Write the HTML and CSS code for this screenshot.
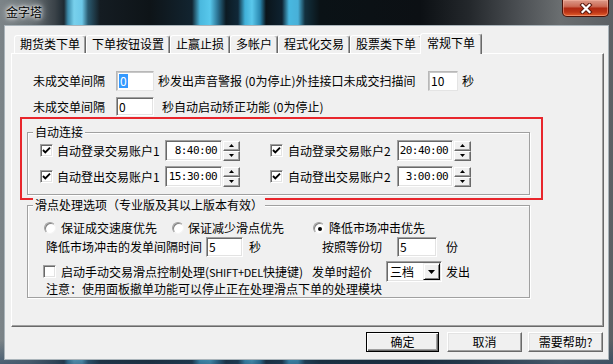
FILE: index.html
```html
<!DOCTYPE html>
<html lang="zh-CN">
<head>
<meta charset="utf-8">
<title>金字塔</title>
<link rel="stylesheet" href="styles.css">
</head>
<body>
<div class="window">
  <div class="titlebar">
    <span class="title">金字塔</span>
    <div class="close">
      <svg width="14" height="11" viewBox="0 0 14 11"><path d="M3.5 2 L10.5 9 M10.5 2 L3.5 9" stroke="#5a1a10" stroke-width="4.2" stroke-linecap="square"/><path d="M3.5 2 L10.5 9 M10.5 2 L3.5 9" stroke="#fff" stroke-width="2.2" stroke-linecap="square"/></svg>
    </div>
  </div>
  <div class="client">
    <div class="tabstrip">
      <div class="tab">期货类下单</div>
      <div class="tab">下单按钮设置</div>
      <div class="tab">止赢止损</div>
      <div class="tab">多帐户</div>
      <div class="tab">程式化交易</div>
      <div class="tab">股票类下单</div>
      <div class="tab active">常规下单</div>
    </div>
    <div class="panel">
      <div class="row r1">
        <span class="lbl w83">未成交单间隔</span>
        <span class="edit light e38"><span class="sel">0</span></span>
        <span class="t1">秒发出声音警报 (0为停止)外挂接口未成交扫描间</span>
        <span class="edit light e30">10</span>
        <span class="ml4">秒</span>
      </div>
      <div class="row r2">
        <span class="lbl w83">未成交单间隔</span>
        <span class="edit e38">0</span>
        <span class="ml8">秒自动启动矫正功能 (0为停止)</span>
      </div>

      <div class="redbox">
        <div class="group g1">
          <span class="legend">自动连接</span>
          <div class="grow">
            <div class="cell1">
              <span class="chk"><svg width="11" height="11" viewBox="0 0 11 11"><path d="M2 5 L4.3 7.4 L9 2.6" fill="none" stroke="#000" stroke-width="1.9"/></svg></span>
              <span class="clabel w108">自动登录交易账户1</span>
              <span class="edit time">8:40:00</span>
              <span class="spin"><span class="sb"><svg width="5" height="3" viewBox="0 0 5 3"><path d="M2.5 0 L5 3 L0 3Z" fill="#000"/></svg></span><span class="sb"><svg width="5" height="3" viewBox="0 0 5 3"><path d="M0 0 L5 0 L2.5 3Z" fill="#000"/></svg></span></span>
            </div>
            <div class="cell2">
              <span class="chk"><svg width="11" height="11" viewBox="0 0 11 11"><path d="M2 5 L4.3 7.4 L9 2.6" fill="none" stroke="#000" stroke-width="1.9"/></svg></span>
              <span class="clabel w109">自动登录交易账户2</span>
              <span class="edit time t56">20:40:00</span>
              <span class="spin"><span class="sb"><svg width="5" height="3" viewBox="0 0 5 3"><path d="M2.5 0 L5 3 L0 3Z" fill="#000"/></svg></span><span class="sb"><svg width="5" height="3" viewBox="0 0 5 3"><path d="M0 0 L5 0 L2.5 3Z" fill="#000"/></svg></span></span>
            </div>
          </div>
          <div class="grow">
            <div class="cell1">
              <span class="chk"><svg width="11" height="11" viewBox="0 0 11 11"><path d="M2 5 L4.3 7.4 L9 2.6" fill="none" stroke="#000" stroke-width="1.9"/></svg></span>
              <span class="clabel w108">自动登出交易账户1</span>
              <span class="edit time">15:30:00</span>
              <span class="spin"><span class="sb"><svg width="5" height="3" viewBox="0 0 5 3"><path d="M2.5 0 L5 3 L0 3Z" fill="#000"/></svg></span><span class="sb"><svg width="5" height="3" viewBox="0 0 5 3"><path d="M0 0 L5 0 L2.5 3Z" fill="#000"/></svg></span></span>
            </div>
            <div class="cell2">
              <span class="chk"><svg width="11" height="11" viewBox="0 0 11 11"><path d="M2 5 L4.3 7.4 L9 2.6" fill="none" stroke="#000" stroke-width="1.9"/></svg></span>
              <span class="clabel w109">自动登出交易账户2</span>
              <span class="edit time t56">3:00:00</span>
              <span class="spin"><span class="sb"><svg width="5" height="3" viewBox="0 0 5 3"><path d="M2.5 0 L5 3 L0 3Z" fill="#000"/></svg></span><span class="sb"><svg width="5" height="3" viewBox="0 0 5 3"><path d="M0 0 L5 0 L2.5 3Z" fill="#000"/></svg></span></span>
            </div>
          </div>
        </div>
      </div>

      <div class="group g2">
        <span class="legend">滑点处理选项（专业版及其以上版本有效）</span>
        <div class="row s1">
          <div class="rc1"><span class="radio"></span><span class="ml5">保证成交速度优先</span></div>
          <div class="rc2"><span class="radio"></span><span class="ml4">保证减少滑点优先</span></div>
          <div class="rc3"><span class="radio on"><span class="dot"></span></span><span class="ml4">降低市场冲击优先</span></div>
        </div>
        <div class="row s2">
          <div class="sc1">
            <span>降低市场冲击的发单间隔时间</span>
            <span class="edit e37">5</span>
            <span class="ml6">秒</span>
          </div>
          <span>按照等份切</span>
          <span class="edit e40">5</span>
          <span class="ml9">份</span>
        </div>
        <div class="row s3">
          <div class="tc1">
            <span class="chk"></span>
            <span class="ml5">启动手动交易滑点控制处理(<span class="latin">SHIFT+DEL</span>快捷键)</span>
          </div>
          <span>发单时超价</span>
          <span class="combo"><span class="val">三档</span><span class="drop"><svg width="7" height="4" viewBox="0 0 7 4"><path d="M0 0 L7 0 L3.5 4Z" fill="#000"/></svg></span></span>
          <span class="ml4">发出</span>
        </div>
        <div class="row s4">
          <span>注意：使用面板撤单功能可以停止正在处理滑点下单的处理模块</span>
        </div>
      </div>
    </div>
    <div class="buttons">
      <div class="btn default b73">确定</div>
      <div class="btn b75 g8">取消</div>
      <div class="btn b75 g6">需要帮助?</div>
    </div>
  </div>
</div>
</body>
</html>
```

FILE: styles.css
```css
html, body {
  margin: 0;
  padding: 0;
}
body {
  width: 613px;
  height: 364px;
  overflow: hidden;
  font-family: "Noto Sans CJK SC", "Noto Sans", sans-serif;
  font-size: 12px;
  line-height: 14px;
  color: #000;
  background:
    linear-gradient(180deg, rgba(0,0,0,0) 0px, rgba(0,0,0,0) 340px, rgba(40,70,100,0.6) 364px),
    linear-gradient(90deg, #7c8488 0px, #6a7276 30px, #3a4248 55px, #1e2a32 64px, #3c8cac 68px, #78d0ec 74px, #6cc8e8 82px, #2a5a70 88px, #141c22 100px, #0e1418 150px, #122430 192px, #4ab8de 200px, #58c8ec 210px, #2a7090 218px, #0c1a22 226px, #102838 238px, #40b0d8 245px, #5ac8ec 252px, #2a88b0 260px, #0a141a 266px, #0e2230 282px, #48b8e0 289px, #48b0d8 298px, #12303e 305px, #0a1216 320px, #0c1014 420px, #24282c 470px, #4c5054 520px, #6a6e70 560px, #5c6064 613px);
}
.window {
  height: 364px;
  display: flex;
  flex-direction: column;
}
.titlebar {
  height: 25px;
  flex: none;
  display: flex;
  justify-content: space-between;
  align-items: flex-start;
}
.title {
  margin: 5px 0 0 4px;
  padding: 0 2px;
  color: #000;
  text-shadow: 0 0 3px #fff, 0 0 6px #fff, 0 0 9px rgba(255,255,255,0.8);
}
.close {
  width: 47px;
  height: 17px;
  margin-right: 4px;
  box-sizing: border-box;
  border: 1px solid #4a1208;
  border-top: none;
  border-radius: 0 0 5px 5px;
  background: linear-gradient(180deg, #dc9a8a 0%, #cc6a54 40%, #b02a12 52%, #bc3416 75%, #e4602c 100%);
  box-shadow: inset 0 0 0 1px rgba(255,190,170,0.45);
  display: flex;
  align-items: center;
  justify-content: center;
}
.client {
  margin: 0 4px;
  height: 335px;
  flex: none;
  box-sizing: border-box;
  border: 1px solid #aab4ba;
  background: #f0f0f0;
}

/* tabs */
.tabstrip {
  display: flex;
  align-items: flex-end;
  height: 20px;
  margin: 7px 0 0 9px;
  position: relative;
  z-index: 1;
}
.tab {
  height: 18px;
  box-sizing: border-box;
  padding: 0 5px;
  border: 1px solid;
  border-bottom: none;
  border-color: #fff #696969 transparent #fff;
  border-radius: 3px 3px 0 0;
  box-shadow: inset -1px 0 #a0a0a0;
  background: #f0f0f0;
  line-height: 16px;
  white-space: nowrap;
}
.tab.active {
  height: 21px;
  margin: 0 0 -1px -2px;
  padding: 0 6px;
  line-height: 18px;
  position: relative;
}

/* panel */
.panel {
  margin-left: 6px;
  width: 593px;
  height: 274px;
  box-sizing: border-box;
  border: 1px solid;
  border-color: #fff #696969 #696969 #fff;
  box-shadow: inset -1px -1px #a0a0a0;
}
.row {
  display: flex;
  align-items: center;
  white-space: nowrap;
}
.r1 { margin: 17px 0 0 21px; height: 20px; }
.r2 { margin: 6px 0 0 21px; height: 19px; }
.w83 { width: 83px; flex: none; }
.t1 { width: 270px; margin-left: 4px; flex: none; }
.ml4 { margin-left: 4px; }
.ml5 { margin-left: 5px; }
.ml6 { margin-left: 6px; }
.ml8 { margin-left: 8px; }
.ml9 { margin-left: 9px; }
.latin { font-size: 11px; letter-spacing: -0.3px; }

.edit {
  box-sizing: border-box;
  height: 100%;
  flex: none;
  display: flex;
  align-items: center;
  padding-left: 2px;
  background: #fff;
  border: 1px solid;
  border-color: #a0a0a0 #fff #fff #a0a0a0;
  box-shadow: inset 1px 1px #696969, inset -1px -1px #e3e3e3;
}
.edit.light {
  border-color: #b8b8b8 #e4e4e4 #e4e4e4 #b8b8b8;
  box-shadow: inset 1px 1px #c8c8c8;
}
.e38 { width: 38px; }
.e30 { width: 30px; }
.e37 { width: 37px; margin-left: 4px; }
.e40 { width: 40px; margin-left: 15px; }
.sel {
  background: #3399ff;
  color: #fff;
  line-height: 14px;
  padding: 0 1px;
}

/* red annotation frame */
.redbox {
  margin: 1px 0 0 8px;
  width: 523px;
  height: 83px;
  box-sizing: border-box;
  border: 2px solid #e8262c;
  padding: 13px 0 0 5px;
}

/* group boxes */
.group {
  position: relative;
  box-sizing: border-box;
  border: 1px solid #a0a0a0;
  box-shadow: inset 1px 1px #fff, 1px 1px #fff;
}
.legend {
  position: absolute;
  top: -8px;
  left: 5px;
  padding: 0 2px;
  background: #f0f0f0;
  white-space: nowrap;
}
.g1 {
  width: 503px;
  height: 63px;
  padding: 7px 0 0 12px;
}
.grow {
  display: flex;
  align-items: center;
  height: 21px;
  white-space: nowrap;
}
.grow + .grow { margin-top: 5px; }
.cell1 {
  width: 230px;
  flex: none;
  display: flex;
  align-items: center;
  height: 21px;
}
.cell2 {
  display: flex;
  align-items: center;
  height: 21px;
}
.clabel { margin-left: 4px; flex: none; }
.w108 { width: 108px; }
.w109 { width: 109px; margin-left: 5px; }

.chk {
  width: 13px;
  height: 13px;
  flex: none;
  box-sizing: border-box;
  background: #fff;
  border: 1px solid;
  border-color: #a0a0a0 #fff #fff #a0a0a0;
  box-shadow: inset 1px 1px #696969, inset -1px -1px #e3e3e3;
  display: flex;
  align-items: center;
  justify-content: center;
}
.chk svg { display: block; }

.time {
  width: 57px;
  height: 21px;
  justify-content: flex-end;
  padding: 0 4px 0 0;
  font-family: "DejaVu Sans Mono", "Liberation Mono", monospace;
  font-size: 11px;
  letter-spacing: -0.6px;
}
.time.t56 { width: 56px; }
.spin {
  width: 17px;
  height: 20px;
  margin-left: 1px;
  flex: none;
  display: flex;
  flex-direction: column;
}
.sb {
  flex: 1;
  box-sizing: border-box;
  border: 1px solid;
  border-color: #fff #696969 #696969 #fff;
  box-shadow: inset -1px -1px #a0a0a0;
  background: #f0f0f0;
  display: flex;
  align-items: center;
  justify-content: center;
}
.sb svg { display: block; }

.g2 {
  margin: 5px 0 0 15px;
  width: 503px;
  height: 93px;
}
.s1 { margin: 14px 0 0 16px; height: 16px; }
.s2 { margin: 1px 0 0 18px; height: 20px; }
.s3 { margin: 4px 0 0 15px; height: 21px; }
.s4 { margin: 0 0 0 18px; height: 14px; }
.rc1 { width: 128px; flex: none; display: flex; align-items: center; }
.rc2 { width: 141px; flex: none; display: flex; align-items: center; }
.rc3 { display: flex; align-items: center; }
.sc1 { width: 276px; flex: none; display: flex; align-items: center; height: 20px; }
.tc1 { width: 269px; flex: none; display: flex; align-items: center; }

.radio {
  width: 12px;
  height: 12px;
  flex: none;
  box-sizing: border-box;
  border-radius: 50%;
  background: #fff;
  border: 1px solid;
  border-color: #a0a0a0 #f4f4f4 #f4f4f4 #a0a0a0;
  box-shadow: inset 1px 1px #808080;
  display: flex;
  align-items: center;
  justify-content: center;
}
.dot {
  width: 4px;
  height: 4px;
  border-radius: 50%;
  background: #000;
  margin: 1px 0 0 1px;
}

.combo {
  width: 56px;
  height: 21px;
  margin-left: 14px;
  flex: none;
  box-sizing: border-box;
  display: flex;
  background: #fff;
  border: 1px solid;
  border-color: #a0a0a0 #fff #fff #a0a0a0;
  box-shadow: inset 1px 1px #696969, inset -1px -1px #e3e3e3;
  padding: 1px;
}
.combo .val {
  flex: 1;
  padding-left: 2px;
  display: flex;
  align-items: center;
}
.combo .drop {
  width: 17px;
  box-sizing: border-box;
  border: 1px solid;
  border-color: #f0f0f0 #000 #000 #f0f0f0;
  box-shadow: inset 1px 1px #fff, inset -1px -1px #808080;
  background: #f0f0f0;
  display: flex;
  align-items: center;
  justify-content: center;
}
.combo .drop svg { display: block; }

/* buttons */
.buttons {
  display: flex;
  justify-content: flex-end;
  margin-top: 5px;
  padding-right: 5px;
}
.btn {
  height: 20px;
  box-sizing: border-box;
  border: 1px solid;
  border-color: #fff #696969 #696969 #fff;
  box-shadow: inset -1px -1px #a0a0a0, inset 1px 1px #e3e3e3;
  background: #f0f0f0;
  text-align: center;
  line-height: 18px;
  white-space: nowrap;
}
.btn.default {
  border-color: #000;
  box-shadow: inset 1px 1px #fff, inset -1px -1px #696969, inset -2px -2px #a0a0a0;
}
.b73 { width: 73px; }
.b75 { width: 75px; }
.g8 { margin-left: 8px; }
.g6 { margin-left: 6px; }
```
